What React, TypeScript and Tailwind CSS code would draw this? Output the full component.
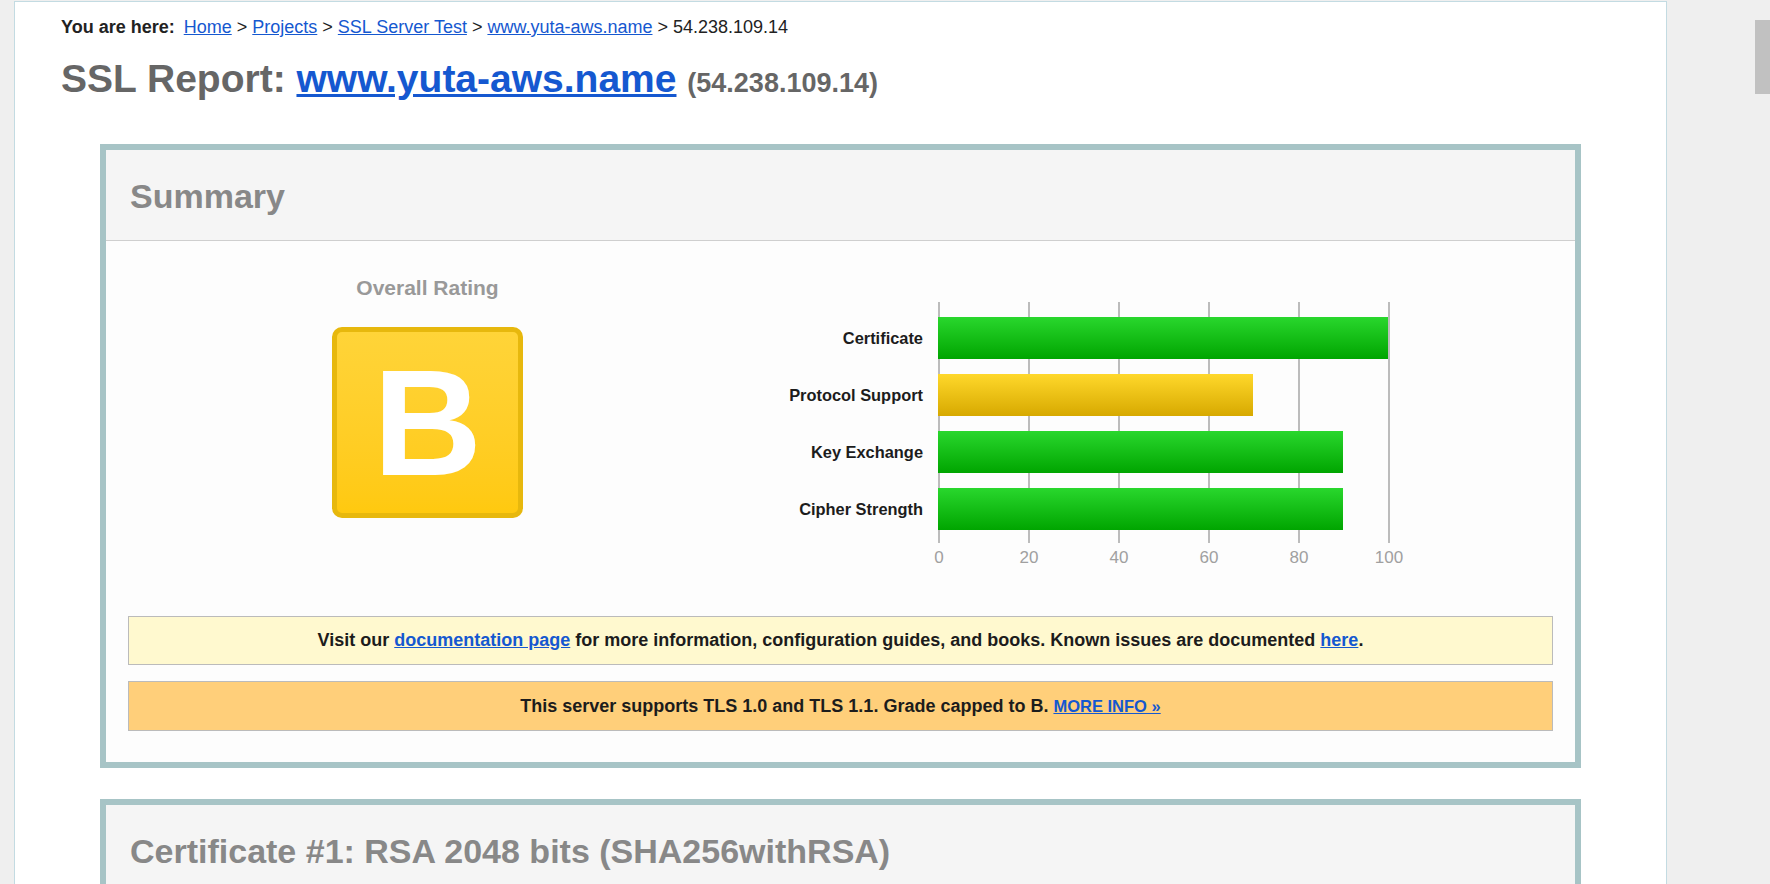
const bars = [
  { label: 'Certificate', value: 100, color: 'green' },
  { label: 'Protocol Support', value: 70, color: 'yellow' },
  { label: 'Key Exchange', value: 90, color: 'green' },
  { label: 'Cipher Strength', value: 90, color: 'green' },
];

const ticks = [0, 20, 40, 60, 80, 100];

const Breadcrumb = () => {
  return (
    <div className="text-[18px] leading-[20px] text-[#222]">
      <span className="font-bold">You are here:</span>
      <span className="ml-[9px]">
        <a className="text-[#1558d0] underline">Home</a> &gt;{' '}
        <a className="text-[#1558d0] underline">Projects</a> &gt;{' '}
        <a className="text-[#1558d0] underline">SSL Server Test</a> &gt;{' '}
        <a className="text-[#1558d0] underline">www.yuta-aws.name</a> &gt; 54.238.109.14
      </span>
    </div>
  );
};

const BoxHeader = ({ title }: { title: string }) => {
  return (
    <div className="h-[91px] border-b border-[#cfcfcf] bg-[#f5f5f5] pl-[24px] pt-[29px]">
      <h2 className="text-[34px] font-bold leading-none text-[#888]">{title}</h2>
    </div>
  );
};

const Chart = () => {
  return (
    <div className="mt-[26px] flex">
      <div className="flex w-[174px] flex-col items-end gap-[15px] pt-[15px]">
        {bars.map((b) => (
          <div key={b.label} className="flex h-[42px] items-center text-[16.4px] font-bold text-[#1c1c1c]">
            {b.label}
          </div>
        ))}
      </div>
      <div className="ml-[15px]">
        <svg width="452" height="241" className="block">
          <defs>
            <linearGradient id="barGreen" x1="0" y1="0" x2="0" y2="1">
              <stop offset="0" stopColor="#29d72d" />
              <stop offset="1" stopColor="#00a500" />
            </linearGradient>
            <linearGradient id="barYellow" x1="0" y1="0" x2="0" y2="1">
              <stop offset="0" stopColor="#ffd82b" />
              <stop offset="1" stopColor="#d7a900" />
            </linearGradient>
          </defs>
          {ticks.map((t, i) => (
            <rect key={t} x={90 * i} y={0} width={2} height={241} fill="#bcbcbc" />
          ))}
          {bars.map((b, k) => (
            <rect
              key={b.label}
              x={0}
              y={15 + 57 * k}
              width={4.5 * b.value}
              height={42}
              fill={b.color === 'green' ? 'url(#barGreen)' : 'url(#barYellow)'}
            />
          ))}
        </svg>
        <div className="ml-[-19px] mt-[5px] flex w-[490px] justify-between">
          {ticks.map((t) => (
            <div key={t} className="w-[40px] text-center text-[17px] leading-[20px] text-[#a0a0a0]">
              {t}
            </div>
          ))}
        </div>
      </div>
    </div>
  );
};

const Summary = () => {
  return (
    <div className="mx-[85px] mt-[38px] border-[6px] border-[#a7c4c6] bg-[#fdfdfd]">
      <BoxHeader title="Summary" />
      <div className="px-[22px] pb-[31px] pt-[35px]">
        <div className="-mx-[22px] flex">
          <div className="flex w-[643px] flex-col items-center">
            <div className="text-[21px] font-bold leading-[24px] text-[#999]">Overall Rating</div>
            <div className="mt-[27px] flex h-[191px] w-[191px] items-center justify-center rounded-[10px] border-[5px] border-[#e7b80d] bg-gradient-to-b from-[#ffd438] to-[#ffc90f]">
              <span className="text-[151px] font-bold leading-none text-white">B</span>
            </div>
          </div>
          <Chart />
        </div>
        <div className="mt-[48px] flex h-[49px] items-center justify-center border border-[#bbb] bg-[#fff9cf] text-[18px] font-bold text-[#1c1c1c]">
          <span>
            Visit our <a className="text-[#1558d0] underline">documentation page</a> for more information, configuration
            guides, and books. Known issues are documented <a className="text-[#1558d0] underline">here</a>.
          </span>
        </div>
        <div className="mt-[16px] flex h-[50px] items-center justify-center border border-[#bbb] bg-[#ffcf7a] text-[18px] font-bold text-[#1c1c1c]">
          <span>
            This server supports TLS 1.0 and TLS 1.1. Grade capped to B.{' '}
            <a className="text-[16.5px] text-[#1558d0] underline">MORE INFO »</a>
          </span>
        </div>
      </div>
    </div>
  );
};

const App = () => {
  return (
    <div className="flex h-[884px] w-full overflow-hidden bg-[#efefef] font-['Liberation_Sans',Arial,sans-serif]">
      <div className="w-[14px] shrink-0" />
      <div className="mt-[1px] w-[1653px] shrink-0 border-l border-r border-t border-[#c3dbe2] bg-white pt-[15px]">
        <div className="px-[46px]">
          <Breadcrumb />
          <h1 className="mt-[19px] text-[39px] font-bold leading-[45px] text-[#666]">
            SSL Report: <a className="text-[#1558d0] underline">www.yuta-aws.name</a>{' '}
            <span className="text-[27px]">(54.238.109.14)</span>
          </h1>
        </div>
        <Summary />
        <div className="mx-[85px] mt-[31px] border-[6px] border-[#a7c4c6] bg-[#fdfdfd]">
          <BoxHeader title="Certificate #1: RSA 2048 bits (SHA256withRSA)" />
        </div>
      </div>
      <div className="flex flex-1 justify-end">
        <div className="mt-[20px] h-[74px] w-[15px] bg-[#c1c1c1]" />
      </div>
    </div>
  );
};

export default App;
